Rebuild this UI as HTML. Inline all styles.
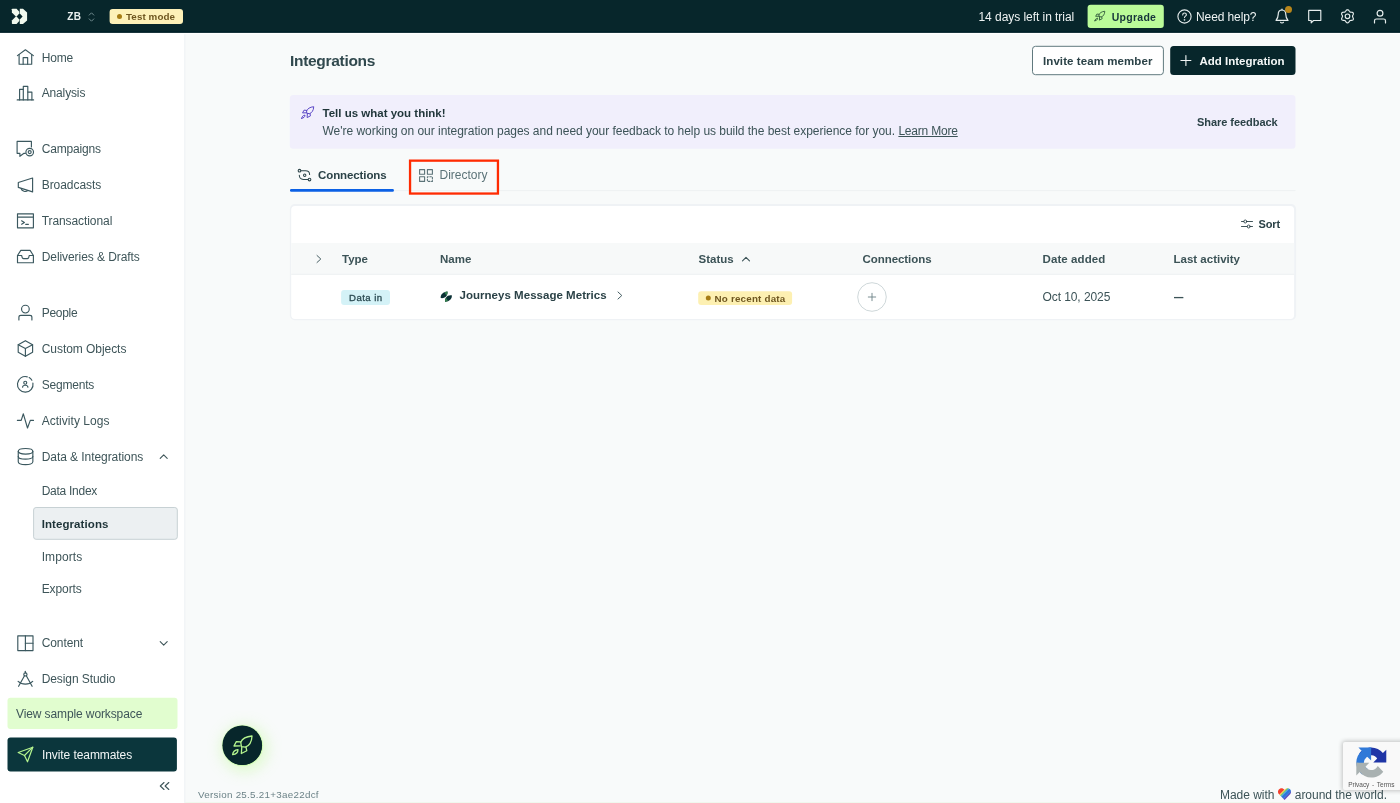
<!DOCTYPE html>
<html lang="en">
<head>
<meta charset="utf-8">
<title>Integrations</title>
<style>
*{box-sizing:border-box;margin:0;padding:0}
html,body{width:1400px;height:803px;overflow:hidden}
body{font-family:"Liberation Sans",sans-serif;font-size:12px;color:#3c5357;background:#f8fafa}
#page{position:absolute;left:0;top:0;width:1400px;height:803px;overflow:hidden;will-change:transform}
.a{position:absolute}
svg{display:block;overflow:visible}
.t{position:absolute;white-space:nowrap;line-height:16px}
.b{font-weight:700}
</style>
</head>
<body>
<div id="page">
<svg class="a" style="left:-1px;top:33px;width:187px;height:771px"><rect x="1" y="1.2" width="184.2" height="768.8" rx="0" fill="#fff"/></svg>
<svg class="a" style="left:183px;top:33px;width:4px;height:771px"><rect x="1.2" y="1" width="1.2" height="769" rx="0" fill="#f0f3f6"/></svg>
<svg class="a" style="left:-1px;top:31px;width:1402px;height:5px"><rect x="1" y="1" width="1400" height="2.2" rx="0" fill="#fff"/></svg>
<svg class="a" style="left:-1px;top:-1px;width:1402px;height:35px"><rect x="1" y="1" width="1400" height="32.7" rx="0" fill="#07262b"/></svg>
<svg class="a" style="left:-1px;top:30px;width:1402px;height:4px"><rect x="1" y="1.1" width="1400" height="1.6" rx="0" fill="#02222a"/></svg>
<svg class="a" style="left:11px;top:8px;width:15.2px;height:15.4px;transform:translate(0.9px,0.7px)" viewBox="0 0 15.2 15.4" fill="#f1f9ee"><path d="M0 0.500 L0.500 0 L4.700 0 L7.400 3 L7.400 4.700 L4.700 7.700 L4 7.700 L0 3.700 Z"/><path d="M0 14.900 L0.500 15.400 L4.700 15.400 L7.400 12.400 L7.400 10.700 L4.700 7.700 L4 7.700 L0 11.700 Z"/><path d="M7.900 0 L11.100 0 L15.200 3.700 L15.200 11.700 L11.100 15.400 L7.900 15.400 L7.900 10.700 L10.700 7.700 L7.900 4.700 Z"/></svg>
<div class="t b" style="left:67.3px;top:8.5px;font-size:10px;letter-spacing:0.3px;color:#e9efef;">ZB</div>
<svg class="a" style="left:88px;top:11px;width:7px;height:11px;transform:translate(0px,0.5px)" viewBox="0 0 7 11" fill="none" stroke="#6f8a8e" stroke-width="1" stroke-linecap="round" stroke-linejoin="round"><path d="M1.200 3.600 L3.500 1.300 L5.800 3.600"/><path d="M1.200 7.400 L3.500 9.700 L5.800 7.400"/></svg>
<svg class="a" style="left:108px;top:7px;width:76px;height:18px"><rect x="1.6" y="1.9" width="73.4" height="15" rx="3" fill="#fdf1b8"/></svg>
<svg class="a" style="left:116px;top:13px;width:7px;height:7px"><rect x="1" y="1" width="5" height="5" rx="2.5" fill="#a67c14"/></svg>
<div class="t b" style="left:126px;top:8.8px;font-size:9.8px;letter-spacing:0.09px;color:#6f5720;">Test mode</div>
<div class="t" style="left:978.5px;top:8.5px;font-size:12px;letter-spacing:-0.05px;color:#eef3f3;">14 days left in trial</div>
<svg class="a" style="left:1086px;top:3px;width:79px;height:27px"><rect x="1.6" y="1.7" width="76.2" height="23.4" rx="3" fill="#bafb99"/></svg>
<svg class="a" style="left:1094px;top:11px;width:10.3px;height:10.3px;transform:translate(0.8px,0px)" viewBox="0 0 24 24" fill="none" stroke="#2a5238" stroke-width="2" stroke-linecap="round" stroke-linejoin="round"><path d="M10 8 C11.500 4.500 16 1.200 23.300 0.600 C23 8 19.500 12.300 15.500 13.800 L10.800 13.200 Z"/><path d="M10 7.600 L4.800 7.200 L2 12.400 L9.300 12.200"/><path d="M11.200 13.900 L10.700 21.300 L17.100 18 L16.200 13.800"/><path d="M0.400 22.700 C0.600 19.500 3 17 6.700 16.600 C6.800 20 4 22.300 0.400 22.700 Z"/></svg>
<div class="t b" style="left:1111.7px;top:8.56px;font-size:10.5px;letter-spacing:0.28px;color:#16353b;">Upgrade</div>
<svg class="a" style="left:1177px;top:9px;width:15px;height:15px" viewBox="0 0 15 15" fill="none" stroke="#e6eded" stroke-width="1.1" stroke-linecap="round" stroke-linejoin="round"><circle cx="7.500" cy="7.500" r="6.600"/><path d="M5.700 5.900 C5.700 4.700 6.500 4 7.500 4 C8.600 4 9.400 4.700 9.400 5.700 C9.400 7.100 7.500 7.100 7.500 8.600"/><circle cx="7.500" cy="10.800" r="0.300" fill="#e6eded"/></svg>
<div class="t" style="left:1196px;top:8.5px;font-size:12px;letter-spacing:-0.1px;color:#eef3f3;">Need help?</div>
<svg class="a" style="left:1274px;top:8px;width:16px;height:17px" viewBox="0 0 16 17" fill="none" stroke="#e6eded" stroke-width="1.2" stroke-linecap="round" stroke-linejoin="round"><path d="M8 2 C5.300 2 4.200 4.200 4.200 6.500 C4.200 9.800 3 11.200 2 12.400 L14 12.400 C13 11.200 11.800 9.800 11.800 6.500 C11.800 4.200 10.700 2 8 2 Z"/><path d="M6.600 14.300 C7 15.200 9 15.200 9.400 14.300"/><path d="M8 2 L8 1"/></svg>
<svg class="a" style="left:1284px;top:5px;width:9px;height:9px"><rect x="1" y="1" width="7" height="7" rx="3.5" fill="#b8861b"/></svg>
<svg class="a" style="left:1307px;top:8px;width:16px;height:15px;transform:translate(0.2px,0.9px)" viewBox="0 0 16 15" fill="none" stroke="#e6eded" stroke-width="1.15" stroke-linecap="round" stroke-linejoin="round"><path d="M1.500 1.500 L13.600 1.500 L13.600 11.600 L6.300 11.600 L4 13.900 L4 11.600 L1.500 11.600 Z"/></svg>
<svg class="a" style="left:1340px;top:8px;width:15px;height:15px;transform:translate(0px,0.8px)" viewBox="0 0 15 15" fill="none" stroke="#e6eded" stroke-width="1.15" stroke-linecap="round" stroke-linejoin="round"><circle cx="7.500" cy="7.500" r="2.300"/><path d="M12.50 7.50 L12.59 7.05 L12.82 6.56 L13.10 6.00 L13.33 5.38 L13.38 4.76 L13.22 4.20 L12.82 3.78 L12.25 3.51 L11.60 3.40 L10.97 3.36 L10.43 3.32 L10.00 3.17 L9.66 2.87 L9.35 2.43 L9.00 1.90 L8.58 1.39 L8.07 1.03 L7.50 0.90 L6.93 1.03 L6.42 1.39 L6.00 1.90 L5.65 2.43 L5.34 2.87 L5.00 3.17 L4.57 3.32 L4.03 3.36 L3.40 3.40 L2.75 3.51 L2.18 3.78 L1.78 4.20 L1.62 4.76 L1.67 5.38 L1.90 6.00 L2.18 6.56 L2.41 7.05 L2.50 7.50 L2.41 7.95 L2.18 8.44 L1.90 9.00 L1.67 9.62 L1.62 10.24 L1.78 10.80 L2.18 11.22 L2.75 11.49 L3.40 11.60 L4.03 11.64 L4.57 11.68 L5.00 11.83 L5.34 12.13 L5.65 12.57 L6.00 13.10 L6.42 13.61 L6.93 13.97 L7.50 14.10 L8.07 13.97 L8.58 13.61 L9.00 13.10 L9.35 12.57 L9.66 12.13 L10.00 11.83 L10.43 11.68 L10.97 11.64 L11.60 11.60 L12.25 11.49 L12.82 11.22 L13.22 10.80 L13.38 10.24 L13.33 9.62 L13.10 9.00 L12.82 8.44 L12.59 7.95 Z"/></svg>
<svg class="a" style="left:1373px;top:9px;width:14px;height:15px" viewBox="0 0 14 15" fill="none" stroke="#e6eded" stroke-width="1.2" stroke-linecap="round" stroke-linejoin="round"><circle cx="7" cy="4.300" r="2.900"/><path d="M1.500 14 L1.500 11.800 C1.500 10.700 2.300 10 3.400 10 L10.600 10 C11.700 10 12.500 10.700 12.500 11.800 L12.500 14"/></svg>
<svg class="a" style="left:32px;top:506px;width:147px;height:35px"><rect x="1.6" y="1.5" width="143.7" height="31.8" rx="2.5" fill="#ecf0f2" stroke="#c7d1d4" stroke-width="1"/></svg>
<div class="t b" style="left:41.7px;top:516.3px;font-size:11.5px;letter-spacing:0.08px;color:#1d3338;">Integrations</div>
<svg class="a" style="left:15px;top:47px;width:20px;height:20px;transform:translate(0.4px,0px)" viewBox="0 0 20 20" fill="none" stroke="#3b585f" stroke-width="1.15" stroke-linecap="round" stroke-linejoin="round"><path d="M2.050 8.600 L10 2.800 L17.950 8.600"/><path d="M3.700 7.600 L3.700 17.200 L16.300 17.200 L16.300 7.600"/><path d="M7.750 17.200 L7.750 10.600 L12.250 10.600 L12.250 17.200"/></svg>
<div class="t" style="left:41.7px;top:50px;font-size:12px;letter-spacing:-0.2px;color:#3e5559;">Home</div>
<svg class="a" style="left:15px;top:83px;width:20px;height:20px;transform:translate(0.4px,0px)" viewBox="0 0 20 20" fill="none" stroke="#3b585f" stroke-width="1.15" stroke-linecap="round" stroke-linejoin="round"><path d="M1.800 16.900 L18.200 16.900"/><path d="M4.200 16.900 L4.200 6.300 L7.900 6.300 L7.900 16.900"/><path d="M7.900 6.300 L7.900 3.400 L12.400 3.400 L12.400 16.900"/><path d="M12.400 9.100 L16.500 9.100 L16.500 16.900"/></svg>
<div class="t" style="left:41.7px;top:85px;font-size:12px;letter-spacing:-0.14px;color:#3e5559;">Analysis</div>
<svg class="a" style="left:15px;top:139px;width:20px;height:20px;transform:translate(0.4px,0px)" viewBox="0 0 20 20" fill="none" stroke="#3b585f" stroke-width="1.15" stroke-linecap="round" stroke-linejoin="round"><path d="M10 14.300 L8.600 14.300 L4.500 17.300 L4.500 14.300 L1.700 14.300 L1.700 2.400 L16 2.400 L16 8"/><circle cx="14.300" cy="13.100" r="3.800"/><circle cx="14.300" cy="13.100" r="1.500"/></svg>
<div class="t" style="left:41.7px;top:141px;font-size:12px;letter-spacing:-0.17px;color:#3e5559;">Campaigns</div>
<svg class="a" style="left:15px;top:175px;width:20px;height:20px;transform:translate(0.4px,0px)" viewBox="0 0 20 20" fill="none" stroke="#3b585f" stroke-width="1.15" stroke-linecap="round" stroke-linejoin="round"><path d="M17.200 3 L17.200 16.900 L2.900 12.400 L2.900 7.500 Z"/><path d="M5.700 13.500 C6.500 16.200 10.500 17.400 12.300 15.500"/></svg>
<div class="t" style="left:41.7px;top:177px;font-size:12px;letter-spacing:-0.05px;color:#3e5559;">Broadcasts</div>
<svg class="a" style="left:15px;top:211px;width:20px;height:20px;transform:translate(0.4px,0px)" viewBox="0 0 20 20" fill="none" stroke="#3b585f" stroke-width="1.15" stroke-linecap="round" stroke-linejoin="round"><rect x="2.100" y="2.800" width="15.900" height="14"/><path d="M2.100 6.100 L18 6.100"/><path d="M6.200 9.800 L9 11.500 L6.200 13.200"/><path d="M10.300 13.300 L13 13.300"/></svg>
<div class="t" style="left:41.7px;top:213px;font-size:12px;letter-spacing:-0.08px;color:#3e5559;">Transactional</div>
<svg class="a" style="left:15px;top:247px;width:20px;height:20px;transform:translate(0.4px,0px)" viewBox="0 0 20 20" fill="none" stroke="#3b585f" stroke-width="1.15" stroke-linecap="round" stroke-linejoin="round"><path d="M2.100 8.500 L2.100 15.700 L18 15.700 L18 8.500 L14.700 3.400 L5.400 3.400 Z"/><path d="M2.100 8.500 L6.300 8.500 C6.500 10.600 7.200 11.600 8.200 11.600 L11.900 11.600 C12.900 11.600 13.600 10.600 13.800 8.500 L18 8.500"/></svg>
<div class="t" style="left:41.7px;top:249px;font-size:12px;letter-spacing:-0.07px;color:#3e5559;">Deliveries &amp; Drafts</div>
<svg class="a" style="left:15px;top:303px;width:20px;height:20px;transform:translate(0.4px,0px)" viewBox="0 0 20 20" fill="none" stroke="#3b585f" stroke-width="1.15" stroke-linecap="round" stroke-linejoin="round"><circle cx="10" cy="6.100" r="3.850"/><path d="M3.500 17 L3.500 14.200 C3.500 13 4.300 12.300 5.500 12.300 L14.500 12.300 C15.700 12.300 16.500 13 16.500 14.200 L16.500 17"/></svg>
<div class="t" style="left:41.7px;top:305px;font-size:12px;letter-spacing:-0.3px;color:#3e5559;">People</div>
<svg class="a" style="left:15px;top:339px;width:20px;height:20px;transform:translate(0.4px,0px)" viewBox="0 0 20 20" fill="none" stroke="#3b585f" stroke-width="1.15" stroke-linecap="round" stroke-linejoin="round"><path d="M10 1.700 L17.200 5.800 L17.200 13.200 L10 17.300 L2.800 13.200 L2.800 5.800 Z"/><path d="M2.800 5.800 L10 9.500 L17.200 5.800"/><path d="M10 9.500 L10 17.300"/></svg>
<div class="t" style="left:41.7px;top:341px;font-size:12px;letter-spacing:-0.05px;color:#3e5559;">Custom Objects</div>
<svg class="a" style="left:15px;top:375px;width:20px;height:20px;transform:translate(0.4px,0px)" viewBox="0 0 20 20" fill="none" stroke="#3b585f" stroke-width="1.15" stroke-linecap="round" stroke-linejoin="round"><path d="M17.530 8 A7.800 7.800 0 1 1 11.870 1.820"/><path d="M13.750 2.600 A7.800 7.800 0 0 1 16.460 5.220"/><circle cx="9.850" cy="7.700" r="1.500"/><path d="M7.200 12.200 C7.200 9.600 12.500 9.600 12.500 12.200"/></svg>
<div class="t" style="left:41.7px;top:377px;font-size:12px;letter-spacing:-0.2px;color:#3e5559;">Segments</div>
<svg class="a" style="left:15px;top:411px;width:20px;height:20px;transform:translate(0.4px,0px)" viewBox="0 0 20 20" fill="none" stroke="#3b585f" stroke-width="1.15" stroke-linecap="round" stroke-linejoin="round"><path d="M2 9.400 L5.800 9.400 L7.950 2.800 L12.100 17 L14.900 9.400 L18.100 9.400"/></svg>
<div class="t" style="left:41.7px;top:413px;font-size:12px;letter-spacing:0.03px;color:#3e5559;">Activity Logs</div>
<svg class="a" style="left:15px;top:447px;width:20px;height:20px;transform:translate(0.4px,0px)" viewBox="0 0 20 20" fill="none" stroke="#3b585f" stroke-width="1.15" stroke-linecap="round" stroke-linejoin="round"><ellipse cx="10.150" cy="4.300" rx="7.300" ry="2.800"/><path d="M2.850 4.300 L2.850 14.700 C2.850 18.500 17.450 18.500 17.450 14.700 L17.450 4.300"/><path d="M2.850 9.400 C2.850 13 17.450 13 17.450 9.400"/></svg>
<div class="t" style="left:41.7px;top:449px;font-size:12px;letter-spacing:-0.06px;color:#3e5559;">Data &amp; Integrations</div>
<div class="t" style="left:41.7px;top:483px;font-size:12px;letter-spacing:-0.27px;color:#3e5559;">Data Index</div>
<div class="t" style="left:41.7px;top:549px;font-size:12px;letter-spacing:0.1px;color:#3e5559;">Imports</div>
<div class="t" style="left:41.7px;top:581px;font-size:12px;letter-spacing:-0.1px;color:#3e5559;">Exports</div>
<svg class="a" style="left:15px;top:633px;width:20px;height:20px;transform:translate(0.4px,0px)" viewBox="0 0 20 20" fill="none" stroke="#3b585f" stroke-width="1.15" stroke-linecap="round" stroke-linejoin="round"><rect x="2.400" y="2.800" width="15.200" height="14.800"/><path d="M10 2.800 L10 17.600"/><path d="M10 10.200 L17.600 10.200"/></svg>
<div class="t" style="left:41.7px;top:635px;font-size:12px;letter-spacing:-0.1px;color:#3e5559;">Content</div>
<svg class="a" style="left:15px;top:669px;width:20px;height:20px;transform:translate(0.4px,0px)" viewBox="0 0 20 20" fill="none" stroke="#3b585f" stroke-width="1.15" stroke-linecap="round" stroke-linejoin="round"><circle cx="10" cy="5.400" r="1.600"/><path d="M10 3.800 L10 2.300"/><path d="M9.100 6.800 L3.200 17.300"/><path d="M10.900 6.800 L16.700 17.300"/><path d="M2.700 12.300 C6.500 16 13.500 16 17.300 12.300"/></svg>
<div class="t" style="left:41.7px;top:671px;font-size:12px;letter-spacing:-0.08px;color:#3e5559;">Design Studio</div>
<svg class="a" style="left:159px;top:453px;width:9px;height:6px;transform:translate(0.2px,0.5px)" viewBox="0 0 9 6" fill="none" stroke="#3e5559" stroke-width="1.1" stroke-linecap="round" stroke-linejoin="round"><path d="M1 4.800 L4.500 1.300 L8 4.800"/></svg>
<svg class="a" style="left:159px;top:640px;width:9px;height:6px;transform:translate(0.2px,0.5px)" viewBox="0 0 9 6" fill="none" stroke="#3e5559" stroke-width="1.1" stroke-linecap="round" stroke-linejoin="round"><path d="M1 1.200 L4.500 4.700 L8 1.200"/></svg>
<svg class="a" style="left:6px;top:696px;width:173px;height:34px"><rect x="1.5" y="1.7" width="170" height="31.2" rx="3" fill="#e1fdcf"/></svg>
<div class="t" style="left:16px;top:706px;font-size:12px;letter-spacing:-0.11px;color:#3e5559;">View sample workspace</div>
<svg class="a" style="left:6px;top:736px;width:172px;height:37px"><rect x="1.5" y="1.5" width="169.4" height="33.9" rx="3" fill="#0b363c"/></svg>
<svg class="a" style="left:17px;top:746px;width:17px;height:17px" viewBox="0 0 17 17" fill="none" stroke="#b5f58f" stroke-width="1.2" stroke-linecap="round" stroke-linejoin="round"><path d="M15.800 1.200 L1.200 6.500 L7.500 9.500 L10.500 15.800 Z"/><path d="M15.800 1.200 L7.500 9.500"/></svg>
<div class="t" style="left:42px;top:747px;font-size:12px;letter-spacing:-0.08px;color:#f2f6f6;">Invite teammates</div>
<svg class="a" style="left:159px;top:781px;width:11px;height:9px;transform:translate(0px,0.5px)" viewBox="0 0 11 9" fill="none" stroke="#3e5559" stroke-width="1.1" stroke-linecap="round" stroke-linejoin="round"><path d="M5 1 L1.300 4.500 L5 8"/><path d="M9.800 1 L6.100 4.500 L9.800 8"/></svg>
<div class="t b" style="left:290px;top:52.5px;font-size:15.5px;letter-spacing:-0.3px;color:#31494e;line-height:20px;margin-top:-2px;">Integrations</div>
<svg class="a" style="left:1031px;top:44px;width:134px;height:33px"><rect x="1.5" y="2.3" width="130.9" height="28.4" rx="3" fill="#fff" stroke="#60797e" stroke-width="1"/></svg>
<div class="t b" style="left:1043px;top:52.5px;font-size:11.5px;letter-spacing:0.08px;color:#2b4247;">Invite team member</div>
<svg class="a" style="left:1169px;top:44px;width:128px;height:33px"><rect x="1.2" y="1.9" width="125.3" height="29.2" rx="3.5" fill="#07262b"/></svg>
<svg class="a" style="left:1180px;top:55px;width:11px;height:11px;transform:translate(0.4px,0px)" viewBox="0 0 11 11" fill="none" stroke="#f2f6f6" stroke-width="1.1" stroke-linecap="round" stroke-linejoin="round"><path d="M5.500 0.500 L5.500 10.500 M0.500 5.500 L10.500 5.500"/></svg>
<div class="t b" style="left:1199.5px;top:52.5px;font-size:11.5px;color:#f4f8f8;">Add Integration</div>
<svg class="a" style="left:288px;top:94px;width:1009px;height:56px"><rect x="1.8" y="1.1" width="1005.7" height="53.7" rx="3.5" fill="#f1effc"/></svg>
<svg class="a" style="left:301px;top:106px;width:12.6px;height:12.6px;transform:translate(0.5px,0.4px)" viewBox="0 0 24 24" fill="none" stroke="#5a46c6" stroke-width="1.9" stroke-linecap="round" stroke-linejoin="round"><path d="M10 8 C11.500 4.500 16 1.200 23.300 0.600 C23 8 19.500 12.300 15.500 13.800 L10.800 13.200 Z"/><path d="M10 7.600 L4.800 7.200 L2 12.400 L9.300 12.200"/><path d="M11.200 13.900 L10.700 21.300 L17.100 18 L16.200 13.800"/><path d="M0.400 22.700 C0.600 19.500 3 17 6.700 16.600 C6.800 20 4 22.300 0.400 22.700 Z"/></svg>
<div class="t b" style="left:322.5px;top:105px;font-size:11.5px;color:#1f3539;">Tell us what you think!</div>
<div class="t" style="left:322.5px;top:123px;font-size:12px;letter-spacing:-0.03px;color:#3c5357;">We're working on our integration pages and need your feedback to help us build the best experience for you. <span style="text-decoration:underline;letter-spacing:-.2px">Learn More</span></div>
<div class="t b" style="left:1197px;top:114px;font-size:11px;letter-spacing:-0.05px;color:#2b4247;">Share feedback</div>
<svg class="a" style="left:289px;top:189px;width:1008px;height:4px"><rect x="1" y="1.1" width="1005.5" height="1" rx="0" fill="#eef1f2"/></svg>
<svg class="a" style="left:289px;top:188px;width:106px;height:5px"><rect x="1" y="1.1" width="103.9" height="2.6" rx="1.2" fill="#0b60e5"/></svg>
<svg class="a" style="left:297px;top:168px;width:15px;height:14px" viewBox="0 0 15 14" fill="none" stroke="#2e464b" stroke-width="1.05" stroke-linecap="round" stroke-linejoin="round"><circle cx="2.500" cy="2.700" r="1.350"/><path d="M3.900 2.700 L8.500 2.700 C11 2.700 12.600 4.500 12.600 6.500"/><circle cx="7.700" cy="7.200" r="1.200"/><path d="M2.300 7.300 C2.300 9.400 3.800 11.400 6.300 11.400 L11.100 11.400"/><circle cx="12.500" cy="11.500" r="1.350"/></svg>
<div class="t b" style="left:318px;top:167px;font-size:11.5px;letter-spacing:-0.1px;color:#2b4247;">Connections</div>
<svg class="a" style="left:407px;top:158px;width:94px;height:38px"><rect x="3.05" y="2.65" width="87.9" height="32.9" rx="0" fill="none" stroke="#ff2b02" stroke-width="2.3"/></svg>
<svg class="a" style="left:419px;top:169px;width:14px;height:13px" viewBox="0 0 14 13" fill="none" stroke="#5b7378" stroke-width="1.1" stroke-linecap="round" stroke-linejoin="round"><rect x="0.600" y="0.600" width="5" height="4.600"/><rect x="8.400" y="0.600" width="5" height="4.600"/><rect x="0.600" y="7.800" width="5" height="4.600"/><rect x="8.400" y="7.800" width="5" height="4.600" stroke-dasharray="1.600 1.600" stroke-dashoffset="0.800"/></svg>
<div class="t" style="left:439.5px;top:167px;font-size:12px;color:#5b7378;">Directory</div>
<svg class="a" style="left:288px;top:203px;width:1010px;height:119px"><rect x="1.9" y="1" width="1006.2" height="116.2" rx="5" fill="#eff2f5"/></svg>
<svg class="a" style="left:290px;top:205px;width:1006px;height:116px"><rect x="1.2" y="1" width="1002.9" height="113.05" rx="4" fill="#fff"/></svg>
<svg class="a" style="left:290px;top:242px;width:1006px;height:34px"><rect x="1.2" y="1" width="1002.9" height="31.6" rx="0" fill="#f7f9f9"/></svg>
<svg class="a" style="left:290px;top:272px;width:1006px;height:4px"><rect x="1.2" y="1.8" width="1002.9" height="1" rx="0" fill="#eef1f2"/></svg>
<svg class="a" style="left:1241px;top:219px;width:12px;height:10px" viewBox="0 0 12 10" fill="none" stroke="#2b4247" stroke-width="0.9" stroke-linecap="round" stroke-linejoin="round"><path d="M0.500 2.500 L2.800 2.500 M5.800 2.500 L11.500 2.500 M0.500 7.500 L6.200 7.500 M9.200 7.500 L11.500 7.500"/><circle cx="4.300" cy="2.500" r="1.500"/><circle cx="7.700" cy="7.500" r="1.500"/></svg>
<div class="t b" style="left:1258.5px;top:216px;font-size:11px;letter-spacing:-0.15px;color:#2b4247;">Sort</div>
<svg class="a" style="left:316px;top:254px;width:6px;height:9px;transform:translate(0px,0.5px)" viewBox="0 0 6 9" fill="none" stroke="#465e63" stroke-width="1" stroke-linecap="round" stroke-linejoin="round"><path d="M1 1 L4.800 4.500 L1 8"/></svg>
<div class="t b" style="left:342px;top:251px;font-size:11.5px;color:#3c5357;">Type</div>
<div class="t b" style="left:440px;top:251px;font-size:11.5px;color:#3c5357;">Name</div>
<div class="t b" style="left:698.5px;top:251px;font-size:11.5px;color:#3c5357;">Status</div>
<svg class="a" style="left:741px;top:256px;width:9px;height:6px;transform:translate(0.5px,0px)" viewBox="0 0 9 6" fill="none" stroke="#3c5357" stroke-width="1.1" stroke-linecap="round" stroke-linejoin="round"><path d="M1 4.800 L4.500 1.300 L8 4.800"/></svg>
<div class="t b" style="left:862.5px;top:251px;font-size:11.5px;letter-spacing:-0.06px;color:#3c5357;">Connections</div>
<div class="t b" style="left:1042.5px;top:251px;font-size:11.5px;letter-spacing:0.09px;color:#3c5357;">Date added</div>
<div class="t b" style="left:1173.5px;top:251px;font-size:11.5px;color:#3c5357;">Last activity</div>
<svg class="a" style="left:340px;top:289px;width:51px;height:17px"><rect x="1.1" y="1" width="48.9" height="14.9" rx="3" fill="#d4f2f7"/></svg>
<div class="t" style="left:349px;top:289.87px;font-size:9.6px;letter-spacing:0.46px;color:#2a4a52;-webkit-text-stroke:.3px #2a4a52;">Data in</div>
<svg class="a" style="left:440px;top:291px;width:11.5px;height:10.5px;transform:translate(0.5px,0.5px)" viewBox="0 0 11.5 10.5" fill="none"><path d="M0.200 6.600 C-0.300 3.200 2.600 0.400 7 0 C7.400 3.400 5.200 7.300 0.200 6.600 Z" fill="#0b3035"/><path d="M4 0.900 C4.900 0.400 5.900 0.100 7 0 C7.150 1.500 6.800 3 6 4.200 Z" fill="#357f4e"/><path d="M11.300 3.800 C11.800 7.200 8.900 10 4.500 10.400 C4.100 7 6.300 3.100 11.300 3.800 Z" fill="#0b3035"/><path d="M7.500 9.500 C6.600 10 5.600 10.300 4.500 10.400 C4.350 8.900 4.700 7.400 5.500 6.200 Z" fill="#357f4e"/></svg>
<div class="t b" style="left:459.5px;top:286.6px;font-size:11.5px;letter-spacing:0.03px;color:#2b4247;">Journeys Message Metrics</div>
<svg class="a" style="left:617px;top:291px;width:6px;height:9px" viewBox="0 0 6 9" fill="none" stroke="#465e63" stroke-width="1" stroke-linecap="round" stroke-linejoin="round"><path d="M1 1 L4.800 4.500 L1 8"/></svg>
<svg class="a" style="left:697px;top:290px;width:97px;height:16px"><rect x="1.2" y="1.3" width="93.9" height="13.7" rx="3" fill="#fdf0b2"/></svg>
<svg class="a" style="left:704px;top:294px;width:8px;height:8px"><rect x="1.8" y="1.6" width="5" height="5" rx="2.5" fill="#a67c14"/></svg>
<div class="t b" style="left:714.5px;top:290.8px;font-size:9.8px;letter-spacing:0.21px;color:#6f5720;">No recent data</div>
<svg class="a" style="left:856px;top:281px;width:32px;height:32px"><rect x="1.7" y="1.7" width="28.6" height="28.6" rx="14.3" fill="#fff" stroke="#cfd8da" stroke-width="1"/></svg>
<svg class="a" style="left:868px;top:293px;width:8px;height:8px" viewBox="0 0 8 8" fill="none" stroke="#6b8287" stroke-width="0.9" stroke-linecap="round" stroke-linejoin="round"><path d="M4 0.300 L4 7.700 M0.300 4 L7.700 4"/></svg>
<div class="t" style="left:1042.5px;top:289px;font-size:12px;letter-spacing:-0.08px;color:#3c5357;">Oct 10, 2025</div>
<div class="t b" style="left:1173.5px;top:288.5px;font-size:12px;color:#3c5357;transform:scaleX(.78);transform-origin:0 50%;">—</div>
<svg class="a" style="left:184px;top:801px;width:1217px;height:3px"><rect x="1" y="1" width="1215" height="1" rx="0" fill="#f0f8ee"/></svg>
<div class="a" style="left:223px;top:726px;width:39px;height:39px;border-radius:50%;background:#07262b;box-shadow:0 0 1px 1px rgba(190,250,150,.7),2px 3px 14px 4px rgba(190,250,150,.42)"></div>
<svg class="a" style="left:221px;top:724px;width:42px;height:43px"><rect x="1.4" y="1.5" width="39.6" height="39.6" rx="19.8" fill="#07262b"/></svg>
<svg class="a" style="left:232px;top:735px;width:20.3px;height:20.3px;transform:translate(0.3px,0.5px)" viewBox="0 0 24 24" fill="none" stroke="#b5f58f" stroke-width="1.55" stroke-linecap="round" stroke-linejoin="round"><path d="M10 8 C11.500 4.500 16 1.200 23.300 0.600 C23 8 19.500 12.300 15.500 13.800 L10.800 13.200 Z"/><path d="M10 7.600 L4.800 7.200 L2 12.400 L9.300 12.200"/><path d="M11.200 13.900 L10.700 21.300 L17.100 18 L16.200 13.800"/><path d="M0.400 22.700 C0.600 19.500 3 17 6.700 16.600 C6.800 20 4 22.300 0.400 22.700 Z"/></svg>
<div class="t" style="left:198px;top:786.8px;font-size:9.8px;letter-spacing:0.28px;color:#6b8287;">Version 25.5.21+3ae22dcf</div>
<div class="t" style="left:1220px;top:786.5px;font-size:12px;letter-spacing:-0.03px;color:#3c5357;">Made with <span style="display:inline-block;width:17px"></span>around the world.</div>
<svg class="a" style="left:1277px;top:788px;width:13.5px;height:12px;transform:translate(0.8px,0px)" viewBox="0 0 13.5 12" fill="none"><defs><clipPath id="hc"><path d="M6.750 11.900 L1.200 6.300 C-0.500 4.400 0.100 1.400 2.500 0.500 C4.100 0 5.800 0.600 6.750 2.100 C7.700 0.600 9.400 0 11 0.500 C13.400 1.400 14 4.400 12.300 6.300 Z"/></clipPath></defs><g clip-path="url(#hc)"><g transform="rotate(45 6.750 6)"><rect x="-6" y="-8" width="9.550" height="28" fill="#f4412f"/><rect x="3.550" y="-8" width="0.400" height="28" fill="#f68a2a"/><rect x="3.850" y="-8" width="0.800" height="28" fill="#f7d531"/><rect x="4.550" y="-8" width="0.900" height="28" fill="#6dc45c"/><rect x="5.450" y="-8" width="0.800" height="28" fill="#27a2b8"/><rect x="6.250" y="-8" width="2.800" height="28" fill="#2b78dd"/><rect x="9.050" y="-8" width="1.200" height="28" fill="#2f4fc8"/><rect x="10.250" y="-8" width="8" height="28" fill="#5b2fb5"/></g></g></svg>
<div class="a" style="left:1343px;top:742px;width:61px;height:48px;border-radius:2px 0 0 2px;background:#f9f9f9;box-shadow:0 0 4px 1px rgba(0,0,0,.22)"></div>
<svg class="a" style="left:1356px;top:747px;width:30px;height:30px;transform:translate(0.3px,0.6px)" viewBox="0 0 64 64" fill="none"><path d="M64 31.955c-.001-.46-.012-.918-.033-1.374V4.571l-7.190 7.190C50.893 4.558 41.941 0 31.955 0 21.563 0 12.331 4.939 6.495 12.589l11.785 11.909a15.615 15.615 0 014.778-5.361c2.064-1.610 4.989-2.927 8.897-2.927.472 0 .836.055 1.104.159 4.842.382 9.039 3.054 11.510 6.933l-8.342 8.342c10.567-.041 22.503-.066 31.773.311" fill="#1f35a6"/><path d="M31.955 0c-.46.001-.918.012-1.374.033H4.571l7.190 7.190C4.558 13.107 0 22.059 0 32.045c0 10.392 4.939 19.624 12.589 25.460l11.909-11.785a15.615 15.615 0 01-5.361-4.778c-1.610-2.064-2.927-4.989-2.927-8.897 0-.472.055-.836.159-1.104.382-4.842 3.054-9.039 6.933-11.510l8.342 8.342c-.041-10.567-.066-22.503.311-31.773" fill="#3079d8"/><path d="M0 32.045c.001.46.012.918.033 1.374v26.010l7.190-7.190C13.107 59.442 22.059 64 32.045 64c10.392 0 19.624-4.939 25.460-12.589L45.720 39.502a15.615 15.615 0 01-4.778 5.361c-2.064 1.610-4.989 2.927-8.897 2.927-.472 0-.836-.055-1.104-.159-4.842-.382-9.039-3.054-11.510-6.933l8.342-8.342c-10.567.041-22.503.066-31.773-.311" fill="#a9b1b1"/></svg>
<div class="t" style="left:1348.3px;top:776.5px;font-size:6.5px;letter-spacing:-0.04px;color:#555;">Privacy <span style="padding:0 1px">-</span> Terms</div>
</div>
</body>
</html>
